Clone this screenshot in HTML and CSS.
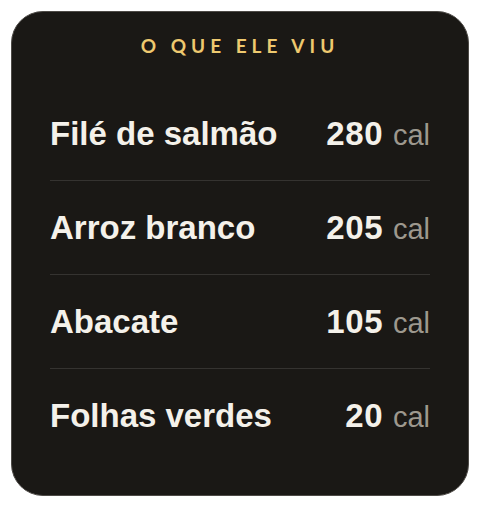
FILE: index.html
```html
<!DOCTYPE html>
<html lang="pt">
<head>
    <meta charset="UTF-8">
    <meta name="viewport" content="width=device-width, initial-scale=1.0">
    <title>O que ele viu</title>
    <link rel="stylesheet" href="styles.css">
</head>
<body>
    <div class="card">
        <h2 class="card-title">O QUE ELE VIU</h2>

        <ul class="food-list">
            <li class="food-row">
                <span class="food-name">Filé de salmão</span>
                <span class="food-cal">280 <small>cal</small></span>
            </li>
            <li class="food-row">
                <span class="food-name">Arroz branco</span>
                <span class="food-cal">205 <small>cal</small></span>
            </li>
            <li class="food-row">
                <span class="food-name">Abacate</span>
                <span class="food-cal">105 <small>cal</small></span>
            </li>
            <li class="food-row">
                <span class="food-name">Folhas verdes</span>
                <span class="food-cal">20 <small>cal</small></span>
            </li>
        </ul>
    </div>
</body>
</html>
```

FILE: styles.css
```css
body {
    margin: 0;
    padding: 11px;
    background-color: #ffffff;
    font-family: "Liberation Sans", Arial, sans-serif;
}
.card {
    box-sizing: border-box;
    width: 458px;
    height: 485px;
    background-color: #1a1815;
    border: 1.5px solid #4d4a46;
    border-radius: 32px;
    padding: 22px 38px 0;
}
.card-title {
    margin: 0;
    text-align: center;
    font-family: Lato, "Open Sans", sans-serif;
    font-weight: 700;
    font-size: 19px;
    line-height: 24px;
    letter-spacing: 5px;
    color: #eec96f;
}
.food-list {
    list-style: none;
    margin: 29px 0 0;
    padding: 0;
}
.food-row {
    display: flex;
    justify-content: space-between;
    align-items: center;
    height: 93px;
    border-bottom: 1.5px solid #353330;
    color: #f4f1ea;
}
.food-row:last-child {
    border-bottom: none;
}
.food-name {
    font-weight: 700;
    font-size: 33px;
}
.food-cal {
    font-weight: 700;
    font-size: 33px;
    letter-spacing: 0.6px;
}
.food-cal small {
    font-weight: 400;
    font-size: 29px;
    letter-spacing: 0;
    color: #9d988e;
}
```
